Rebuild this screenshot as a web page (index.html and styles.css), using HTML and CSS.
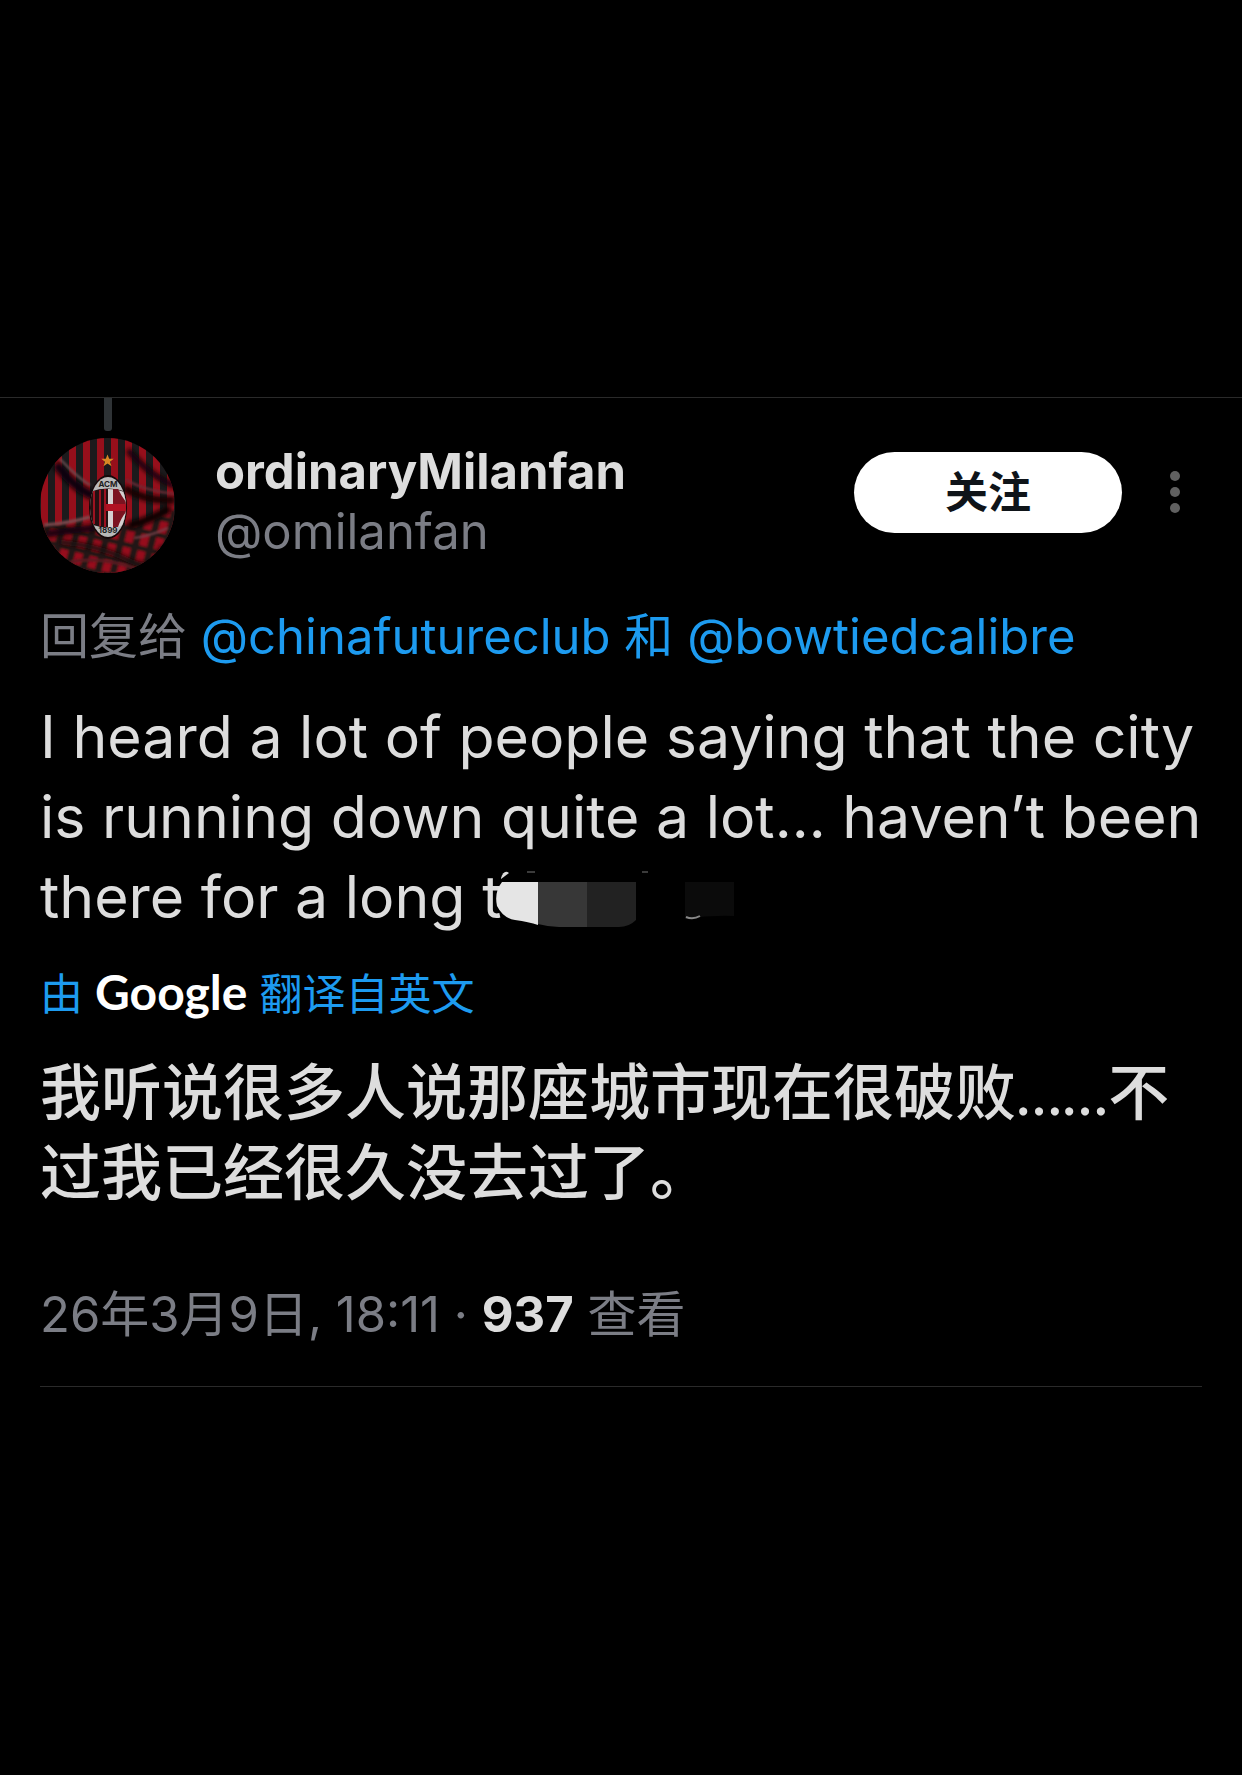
FILE: index.html
```
<!DOCTYPE html>
<html lang="zh-CN">
<head>
  <meta charset="UTF-8">
  <meta name="viewport" content="width=device-width, initial-scale=1.0">
  <title>ordinaryMilanfan</title>
  <link rel="stylesheet" href="styles.css">
</head>
<body>

<main class="thread">
  <article class="tweet">
    <header class="tweet-header">
      <svg class="avatar" viewBox="0 0 135 135" aria-hidden="true">
        <defs>
          <clipPath id="circle"><circle cx="67.5" cy="67.5" r="67.5"/></clipPath>
          <clipPath id="badge"><ellipse cx="68" cy="69" rx="18" ry="30"/></clipPath>
          <pattern id="stripes" width="14" height="135" patternUnits="userSpaceOnUse">
            <rect width="14" height="135" fill="#1c1a1c"/>
            <rect x="1" width="7" height="135" fill="#960f1b"/>
          </pattern>
          <pattern id="stripes-low" width="15" height="17" patternUnits="userSpaceOnUse" patternTransform="rotate(14)">
            <rect width="15" height="17" fill="#241416"/>
            <rect x="2" width="8" height="12" fill="#960f1b"/>
          </pattern>
          <filter id="soft" x="-20%" y="-20%" width="140%" height="140%"><feGaussianBlur stdDeviation="2"/></filter>
          <filter id="softer" x="-20%" y="-20%" width="140%" height="140%"><feGaussianBlur stdDeviation="1"/></filter>
        </defs>
        <g clip-path="url(#circle)">
          <rect width="135" height="135" fill="url(#stripes)"/>
          <path d="M0 88 L52 82 L90 88 L135 72 V135 H0Z" fill="url(#stripes-low)" filter="url(#softer)"/>
          <!-- folds in the cloth -->
          <g filter="url(#soft)" fill="none">
            <path d="M16 26 Q36 52 54 58" stroke="#090607" stroke-width="9"/>
            <path d="M88 12 Q110 38 135 48" stroke="#140607" stroke-width="6"/>
            <path d="M84 50 Q106 64 135 62" stroke="#120506" stroke-width="7"/>
            <path d="M6 96 Q32 92 56 90" stroke="#160607" stroke-width="7"/>
            <path d="M88 88 Q112 82 130 70" stroke="#0c0405" stroke-width="8"/>
            <path d="M20 104 Q60 108 88 122 T122 108" stroke="#1c0809" stroke-width="5"/>
          </g>
          <g filter="url(#softer)" fill="none">
            <path d="M20 21 Q38 40 50 47" stroke="#6b5053" stroke-width="2"/>
            <path d="M86 42 Q106 53 135 56" stroke="#6e2c35" stroke-width="2"/>
            <path d="M4 87 Q30 85 50 79" stroke="#7d4c50" stroke-width="3"/>
            <path d="M94 100 Q110 98 128 90" stroke="#74414a" stroke-width="2"/>
            <path d="M30 124 Q60 118 94 130" stroke="#5c1a21" stroke-width="3"/>
          </g>
          <path d="M67.500 16.500 l1.700 4.300 h4.500 l-3.600 2.900 1.400 4.600 -4 -2.700 -4 2.700 1.400 -4.600 -3.600 -2.900 h4.500z" fill="#d98724"/>
          <ellipse cx="68" cy="69" rx="19" ry="32" fill="#140809"/>
          <g clip-path="url(#badge)">
            <rect x="49" y="38" width="38" height="62" fill="#b9b9b9"/>
            <path d="M49 54q19-7 38 0v32q-19 7-38 0z" fill="#241012"/>
            <path d="M54 53v33M60 52v36M65 51v38" stroke="#9c1220" stroke-width="2"/>
            <path d="M68 51q10 0 18 4v31q-8 4-18 4z" fill="#d5d0d0"/>
            <path d="M73 51h5q4 8 8 13v10q-5 6-8 15h-5z" fill="#7b1320"/>
            <path d="M66 66h20v7h-20z" fill="#b01222"/>
          </g>
          <text class="badge-text" x="68" y="49">ACM</text>
          <text class="badge-text" x="68" y="95">1899</text>
        </g>
      </svg>
      <div class="user">
        <div class="name">ordinaryMilanfan</div>
        <div class="handle">@omilanfan</div>
      </div>
      <button class="follow" type="button">关注</button>
      <button class="more" type="button" aria-label="更多">
        <svg width="10" height="42" viewBox="0 0 10 42"><circle cx="5" cy="5" r="5"/><circle cx="5" cy="21" r="5"/><circle cx="5" cy="37" r="5"/></svg>
      </button>
    </header>

    <p class="reply-to">回复给 <a href="#">@chinafutureclub</a> <a href="#">和</a> <a href="#">@bowtiedcalibre</a></p>

    <p class="text" lang="en">I heard a lot of people saying that the city is running down quite a lot... haven’t been there for a long t<svg class="redacted" width="240" height="60" viewBox="0 0 240 60" aria-hidden="true">
      <path d="M6 8q3-9 8-5l-8 6z" fill="#ddd"/>
      <path d="M32 2h8M147 2h6" stroke="#777" stroke-width="1"/>
      <path d="M7 12H43V55Q34 52 20 50Q8 48 2 36Q-1 22 7 12z" fill="#e5e5e5"/>
      <path d="M43 12H92V57H64Q54 57 43 54z" fill="#373737"/>
      <path d="M92 12H141V50Q134 57 124 57H92z" fill="#222"/>
      <path d="M190 12H239V46Q215 45 190 49z" fill="#0b0b0b"/>
      <path d="M191 47q7 3 14-1" fill="none" stroke="#888" stroke-width="2"/>
    </svg></p>

    <a class="translated" href="#">由 <span class="google">Google</span> 翻译自英文</a>

    <p class="text translation">我听说很多人说那座城市现在很破败……不过我已经很久没去过了。</p>

    <footer class="meta"><time datetime="2026-03-09T18:11">26年3月9日, 18:11</time> · <strong>937</strong> 查看</footer>
  </article>
</main>

</body>
</html>
```
FILE: styles.css
```
* {
  box-sizing: border-box;
}

body {
  margin: 0;
  background-color: #000;
  color: #ddd;
  font-family: Inter, "Noto Sans CJK SC", sans-serif;
  font-size: 49px;
  line-height: 64px;
}

p {
  margin: 0;
}

a {
  color: #1d9bf0;
  text-decoration: none;
}

button {
  border: 0;
  padding: 0;
  font-family: inherit;
  cursor: pointer;
}

.thread {
  padding-top: 397px;
}

.tweet {
  position: relative;
  padding: 40px 40px 0;
  border-top: 1px solid #2a2a2a;
}

/* line that joins the avatar to the tweet above */
.tweet::before {
  content: "";
  position: absolute;
  top: 0;
  left: 104px;
  width: 8px;
  height: 33px;
  border-radius: 0 0 3px 3px;
  background-color: #2f3336;
}

.tweet-header {
  display: flex;
  align-items: center;
}

.avatar {
  flex: none;
  width: 135px;
  height: 135px;
}

.badge-text {
  font-size: 8px;
  font-weight: 700;
  text-anchor: middle;
  fill: #1d1d1d;
}

.user {
  flex: 1;
  min-width: 0;
  margin-left: 40px;
  padding-bottom: 8px;
  line-height: 60px;
}

.name {
  font-weight: 700;
}

.handle {
  color: #7b7d85;
}

.follow {
  width: 268px;
  height: 81px;
  margin-bottom: 27px;
  padding-bottom: 6px;
  border-radius: 41px;
  background-color: #fff;
  color: #0f1419;
  font-size: 43px;
  font-weight: 700;
}

.more {
  display: flex;
  justify-content: center;
  width: 54px;
  margin-bottom: 27px;
  margin-left: 26px;
  background: none;
  fill: #606060;
}

.reply-to {
  margin-top: 32px;
  color: #7b7d85;
}

.text {
  margin-top: 28px;
  font-size: 59px;
  line-height: 80px;
}

.redacted {
  margin-left: -6px;
  vertical-align: -12px;
}

.translated {
  display: flex;
  align-items: center;
  gap: 12px;
  margin-top: 27px;
  font-size: 43px;
  line-height: 60px;
}

.google {
  padding-bottom: 4px;
  color: #fff;
  font-family: Lato, sans-serif;
  font-size: 48px;
  font-weight: 700;
  line-height: 56px;
}

.translation {
  font-family: Lato, "Noto Sans CJK SC", sans-serif;
  font-size: 61px;
  font-weight: 500;
}

.meta {
  margin-top: 71px;
  padding-bottom: 39px;
  border-bottom: 1px solid #2a2a2a;
  color: #7b7d85;
}

.meta strong {
  color: #ddd;
}

@media (max-width: 900px) {
  .thread {
    padding-top: 80px;
  }

  .tweet-header {
    flex-wrap: wrap;
    gap: 20px;
  }
}
```
